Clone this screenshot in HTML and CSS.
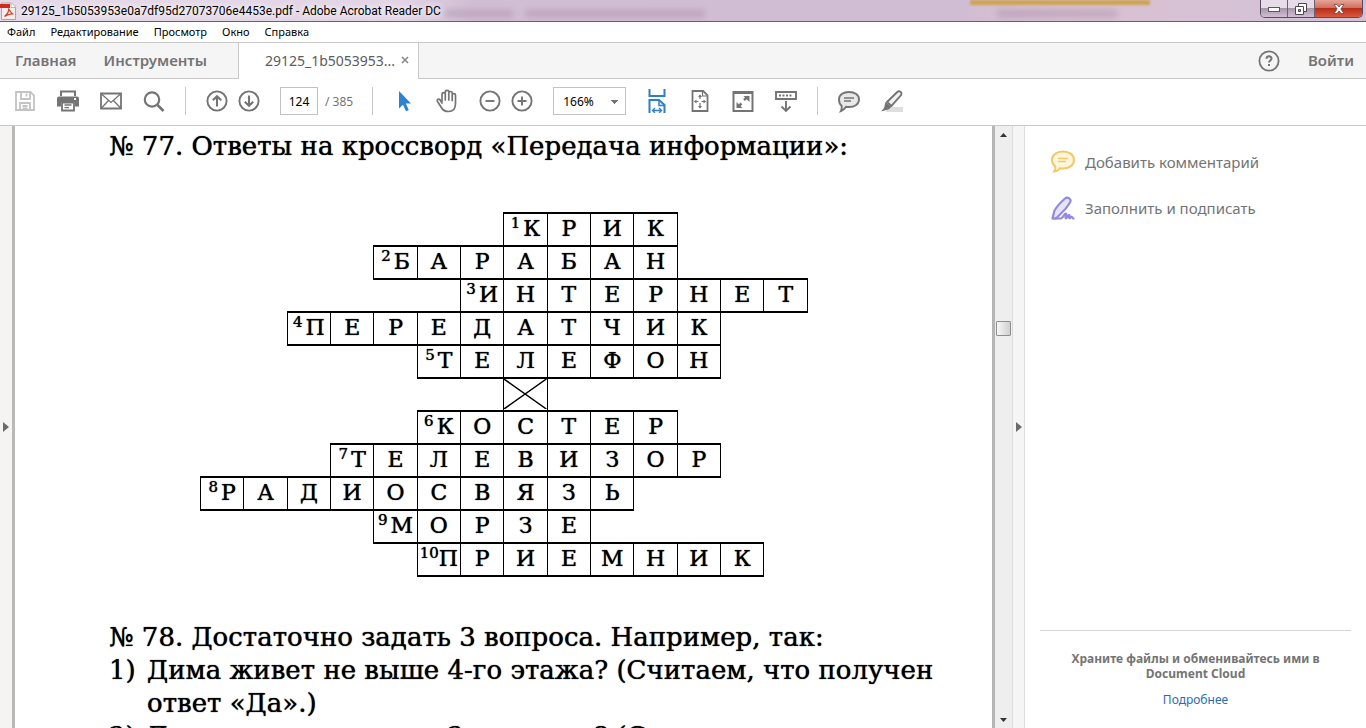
FILE: index.html
```html
<!DOCTYPE html>
<html lang="ru">
<head>
<meta charset="utf-8">
<title>29125_1b5053953e0a7df95d27073706e4453e.pdf - Adobe Acrobat Reader DC</title>
<link rel="stylesheet" href="styles.css">
</head>
<body>
<header class="titlebar">
  <span class="glass-gold"></span>
  <span class="glass-smudge smudge-a"></span>
  <span class="glass-smudge smudge-b"></span>
  <span class="glass-smudge smudge-c"></span>
  <svg class="app-icon" width="16" height="18" viewBox="0 0 16 18"><path d="M1.500 1h10l4 4v12.500h-14z" fill="#f3eeee" stroke="#aaa3a8"/><path d="M0 2h10v4H0z" fill="#d3281c"/><path d="M11 1v4.500h4.500" fill="#fff" stroke="#b8b0b4"/><path d="M4.500 14.500C7 12.500 9 9 8.500 6.500c2 4 3 5 5 5.500-3-.5-6 .5-9 2.500z" fill="none" stroke="#d8402f" stroke-width="1.200"/></svg>
  <span class="title">29125_1b5053953e0a7df95d27073706e4453e.pdf - Adobe Acrobat Reader DC</span>
  <div class="win-buttons">
    <button class="win-btn win-min" aria-label="Свернуть"><svg width="14" height="8" viewBox="0 0 14 8"><rect x="1.500" y="2.500" width="11" height="4" fill="#fff" stroke="#5d5560"/></svg></button>
    <button class="win-btn win-max" aria-label="Восстановить"><svg width="12" height="12" viewBox="0 0 12 12"><path d="M3.500.5h8v8h-8z" fill="#fff" stroke="#4d4652"/><path d="M.5 3.500h8v8h-8z" fill="#fff" stroke="#4d4652"/><path d="M3.500 6.500h2v2h-2z" fill="#a99bac" stroke="#4d4652"/></svg></button>
    <button class="win-btn win-close" aria-label="Закрыть"><svg width="12" height="10" viewBox="0 0 12 10"><path d="M1 .5h3l2 2.500L8 .5h3L7.800 5 11 9.500H8L6 7 4 9.500H1L4.200 5z" fill="#fff" stroke="#6b4040" stroke-width=".8"/></svg></button>
  </div>
</header>
<nav class="menubar">
  <button>Файл</button><button>Редактирование</button><button>Просмотр</button><button>Окно</button><button>Справка</button>
</nav>
<div class="tabbar">
  <button class="tab-main">Главная</button>
  <button class="tab-main">Инструменты</button>
  <div class="tab-doc"><span>29125_1b5053953...</span><button aria-label="Закрыть вкладку"><svg width="8" height="8" viewBox="0 0 8 8"><path d="M1 1l6 6M7 1L1 7" stroke="#8a8a8a" stroke-width="1.600"/></svg></button></div>
  <button class="help" aria-label="Справка"><svg width="22" height="22" viewBox="0 0 22 22" fill="none" stroke="#747474" stroke-width="1.800"><circle cx="11" cy="11" r="9.600"/><path d="M8.500 8.800c0-3.200 5-3.200 5-.3 0 1.900-2.500 2-2.500 4" stroke-width="2"/><path d="M11 14v2" stroke-width="2"/></svg></button>
  <button class="login">Войти</button>
</div>
<div class="toolbar">
  <button aria-label="Сохранить"><svg viewBox="0 0 24 24" fill="none" stroke="#c3c3c3" stroke-width="1.800"><path d="M3 3h14.500L21 6.500V21H3z"/><path d="M8 3v7h9V3M13.500 4.500v3M7 21v-7h10v7M9.500 17h5M9.500 19.500h5"/></svg></button>
  <button aria-label="Печать"><svg viewBox="0 0 24 24"><path d="M5 7V2.500h14V7" fill="none" stroke="#747474" stroke-width="2"/><path d="M3 7.500h18a2 2 0 0 1 2 2v8h-4V13H5v4.500H1v-8a2 2 0 0 1 2-2z" fill="#747474"/><path d="M6 13.500h12v8H6z" fill="#fff" stroke="#747474" stroke-width="1.800"/><path d="M8.500 16h7M8.500 18.700h4.500" stroke="#747474" stroke-width="1.300"/><path d="M18 9h2v2h-2z" fill="#fff"/></svg></button>
  <button aria-label="Отправить"><svg viewBox="0 0 24 24" fill="none" stroke="#747474"><path d="M2 4.500h20v15H2z" stroke-width="1.800"/><path d="M2.500 5l9.500 8.500L21.500 5M2.500 19l7-7.500M21.500 19l-7-7.500" stroke-width="1.300"/></svg></button>
  <button aria-label="Найти"><svg viewBox="0 0 24 24" fill="none" stroke="#747474"><circle cx="10" cy="10.500" r="7.200" stroke-width="2.200"/><path d="M15.500 16l6 6" stroke-width="2.600"/></svg></button>
  <span class="sep"></span>
  <div class="pair">
    <button aria-label="Предыдущая"><svg viewBox="0 0 24 24" fill="none" stroke="#747474" stroke-width="1.900"><circle cx="12" cy="12" r="9.600"/><path d="M12 17.500V7.500M7.800 11.300L12 7.200l4.200 4.100" stroke-width="2.100"/></svg></button>
    <button aria-label="Следующая"><svg viewBox="0 0 24 24" fill="none" stroke="#747474" stroke-width="1.900"><circle cx="12" cy="12" r="9.600"/><path d="M12 6.500v10M7.800 12.700l4.200 4.100 4.200-4.100" stroke-width="2.100"/></svg></button>
  </div>
  <label class="pages"><input type="text" value="124" aria-label="Страница"><span>/ 385</span></label>
  <span class="sep"></span>
  <button aria-label="Выделение"><svg viewBox="0 0 24 24"><path d="M7 2v17.500l4-3.800 3 6.500 2.800-1.300-3-6.400H19z" fill="#2e83d0"/></svg></button>
  <button aria-label="Рука"><svg viewBox="0 0 24 24" fill="none" stroke="#747474" stroke-width="1.700" stroke-linecap="round" stroke-linejoin="round"><path d="M7 12.500V5.200c0-2 3.300-2 3.300 0V11 2.800c0-2 3.500-2 3.500 0V11 4c0-2 3.400-2 3.400 0v7.500V6.200c0-2 3.300-2 3.300 0v8.300c0 5-2.500 8-7 8-3.700 0-6-1.500-7.500-4.500l-3.600-5.800c-.8-1.900 1.500-2.800 2.800-1.200L7 14"/></svg></button>
  <div class="pair">
    <button aria-label="Уменьшить"><svg viewBox="0 0 24 24" fill="none" stroke="#747474" stroke-width="1.900"><circle cx="12" cy="12" r="9.600"/><path d="M7.500 12h9"/></svg></button>
    <button aria-label="Увеличить"><svg viewBox="0 0 24 24" fill="none" stroke="#747474" stroke-width="1.900"><circle cx="12" cy="12" r="9.600"/><path d="M7.500 12h9M12 7.500v9"/></svg></button>
  </div>
  <select class="zoom" aria-label="Масштаб"><option>166%</option></select>
  <button aria-label="По ширине"><svg viewBox="0 0 24 24" fill="none" stroke="#2e7fc6" stroke-width="2"><path d="M4.500 0v7h15V0M4.500 24V11H14l5.500 5v8"/><path d="M14 11v5.500h5.500" stroke-width="1.500"/><path d="M7.500 21.500h9M10 19l-2.500 2.500L10 24M14 19l2.500 2.500L14 24" stroke-width="1.300"/></svg></button>
  <button aria-label="Страница целиком"><svg viewBox="0 0 24 24" fill="none" stroke="#747474" stroke-width="1.800"><path d="M4.500 2h10.700l4.300 4.300V22h-15z"/><path d="M14.500 2v5h5" stroke-width="1.200"/><path d="M12 6v4M12 14v5M6.500 12.500h4M13.500 12.500h4" stroke-width="1.200"/><path d="M10 8l2-2.500L14 8zM10 17l2 2.500 2-2.500zM8.500 10.500l-2.500 2 2.500 2zM15.500 10.500l2.500 2-2.500 2z" fill="#747474" stroke="none"/></svg></button>
  <button aria-label="Полный экран"><svg viewBox="0 0 24 24" fill="none" stroke="#747474" stroke-width="2"><path d="M2.500 3h19v19h-19z"/><path d="M2.500 3.500h19" stroke-width="3"/><path d="M13 11l4-3.500M10.500 14.500l-4 3.500" stroke-width="2.400"/><path d="M12.500 7h6v6zM11.500 19h-6v-6z" fill="#747474" stroke="none"/></svg></button>
  <button aria-label="Режим чтения"><svg viewBox="0 0 24 24" fill="none" stroke="#747474" stroke-width="1.900"><path d="M2 3h20v7H2z"/><path d="M5 6.500h14" stroke-dasharray="2 1.500" stroke-width="2"/><path d="M12 12v10M7.500 17.500l4.500 4.500 4.500-4.500"/></svg></button>
  <span class="sep"></span>
  <button aria-label="Комментарий"><svg viewBox="0 0 24 24"><path d="M12 3c6 0 10 3 10 7.500S18 18 12 18c-1.200 0-2-.1-3-.3-1.200 2-3 3.600-5 4.300.8-1.500 1-3.300.6-5.200C2.900 15.400 2 13.200 2 10.500 2 6 6 3 12 3z" fill="#e8e8e8" stroke="#747474" stroke-width="1.900"/><path d="M7 9h10M7 12h7" stroke="#747474" stroke-width="1.300"/></svg></button>
  <button aria-label="Выделить текст"><svg viewBox="0 0 24 24"><path d="M7 18h16v5H6z" fill="#dedede"/><path d="M7 13L17.500 2.800c2-1.600 4.800.5 3.800 3L11.500 17z" fill="#f2f2f2" stroke="#747474" stroke-width="1.900"/><path d="M5.500 13l6 4.700-2.500 2.500L1 22.500l3-3.500z" fill="#747474"/></svg></button>
</div>
<main class="workspace">
  <button class="rail rail-left" aria-label="Показать панель навигации"><svg width="6" height="10" viewBox="0 0 6 10"><path d="M0 0l6 5-6 5z" fill="#6b6b6b"/></svg></button>
  <article class="page">
    <h2>№ 77. Ответы на кроссворд «Передача информации»:</h2>
    <table class="crossword">
      <tr><td class="gap" colspan="7"></td><td><sup>1</sup>К</td><td>Р</td><td>И</td><td>К</td><td class="gap" colspan="3"></td></tr>
      <tr><td class="gap" colspan="4"></td><td><sup>2</sup>Б</td><td>А</td><td>Р</td><td>А</td><td>Б</td><td>А</td><td>Н</td><td class="gap" colspan="3"></td></tr>
      <tr><td class="gap" colspan="6"></td><td><sup>3</sup>И</td><td>Н</td><td>Т</td><td>Е</td><td>Р</td><td>Н</td><td>Е</td><td>Т</td></tr>
      <tr><td class="gap" colspan="2"></td><td><sup>4</sup>П</td><td>Е</td><td>Р</td><td>Е</td><td>Д</td><td>А</td><td>Т</td><td>Ч</td><td>И</td><td>К</td><td class="gap" colspan="2"></td></tr>
      <tr><td class="gap" colspan="5"></td><td><sup>5</sup>Т</td><td>Е</td><td>Л</td><td>Е</td><td>Ф</td><td>О</td><td>Н</td><td class="gap" colspan="2"></td></tr>
      <tr><td class="gap" colspan="7"></td><td><svg class="cross" viewBox="0 0 42 32" preserveAspectRatio="none"><path d="M0 0l42 32M42 0L0 32" stroke="#000" stroke-width="1.500"/></svg></td><td class="gap" colspan="6"></td></tr>
      <tr><td class="gap" colspan="5"></td><td><sup>6</sup>К</td><td>О</td><td>С</td><td>Т</td><td>Е</td><td>Р</td><td class="gap" colspan="3"></td></tr>
      <tr><td class="gap" colspan="3"></td><td><sup>7</sup>Т</td><td>Е</td><td>Л</td><td>Е</td><td>В</td><td>И</td><td>З</td><td>О</td><td>Р</td><td class="gap" colspan="2"></td></tr>
      <tr><td><sup>8</sup>Р</td><td>А</td><td>Д</td><td>И</td><td>О</td><td>С</td><td>В</td><td>Я</td><td>З</td><td>Ь</td><td class="gap" colspan="4"></td></tr>
      <tr><td class="gap" colspan="4"></td><td><sup>9</sup>М</td><td>О</td><td>Р</td><td>З</td><td>Е</td><td class="gap" colspan="5"></td></tr>
      <tr><td class="gap" colspan="5"></td><td><sup class="wide">10</sup>П</td><td>Р</td><td>И</td><td>Е</td><td>М</td><td>Н</td><td>И</td><td>К</td><td class="gap"></td></tr>
    </table>
    <h2>№ 78. Достаточно задать 3 вопроса. Например, так:</h2>
    <div class="item"><span>1)</span><p>Дима живет не выше 4-го этажа? (Считаем, что получен<br>ответ «Да».)</p></div>
    <div class="item"><span>2)</span><p>Дима живет не выше 2-го этажа? (Считаем</p></div>
  </article>
  <div class="scrollbar">
    <button aria-label="Вверх"><svg width="7" height="4" viewBox="0 0 7 4"><path d="M0 4l3.500-4L7 4z" fill="#333"/></svg></button>
    <div class="track"><span class="thumb"></span></div>
    <button aria-label="Вниз"><svg width="7" height="4" viewBox="0 0 7 4"><path d="M0 0l3.500 4L7 0z" fill="#333"/></svg></button>
  </div>
  <button class="rail rail-right" aria-label="Скрыть панель инструментов"><svg width="6" height="10" viewBox="0 0 6 10"><path d="M0 0l6 5-6 5z" fill="#6b6b6b"/></svg></button>
  <aside class="panel">
    <button class="tool"><svg width="24" height="24" viewBox="0 0 24 24"><path d="M12 1.500c6.500 0 11 3.500 11 8.500s-4.500 8.500-11 8.500c-1 0-2-.1-3-.3-1.300 2-3.300 3-5.800 3.300 1.100-1.600 1.600-3.200 1.100-5C2.200 14.900 1 12.600 1 10c0-5 4.500-8.500 11-8.500z" fill="#fdf6dc" stroke="#efca68" stroke-width="2"/><path d="M7 8.500h10M7 11.500h8" stroke="#efca68" stroke-width="1.400"/></svg>Добавить комментарий</button>
    <button class="tool"><svg width="24" height="24" viewBox="0 0 24 24" fill="none" stroke="#9389dd" stroke-width="2.200" stroke-linecap="round" stroke-linejoin="round"><path d="M1.500 22.500l1.800-7.500C6 10 10 6 14 2.500c2.500-2.300 7 .5 5 4C16.500 11 13 15 9 18.500L5 22.500z" fill="#e6e3fb"/><path d="M2 22.500h8c2.500-.8 3.500-5.500 5-5s-1.500 4.800 0 4.800c1.300 0 2.300-3.800 3.300-3.300.9.500-.8 3 .2 3.200 1 .2 1.500-1.700 2.200-1.500.8.200.6 1.600 1.800 1.800"/></svg>Заполнить и подписать</button>
    <div class="cloud">
      <strong>Храните файлы и обменивайтесь ими в Document Cloud</strong>
      <a href="#">Подробнее</a>
    </div>
  </aside>
</main>
</body>
</html>
```
FILE: styles.css
```css
* { box-sizing: border-box; }
body {
  margin: 0;
  height: 100vh;
  display: flex;
  flex-direction: column;
  overflow: hidden;
  background: #fff;
  font-family: "Noto Sans", "Open Sans", sans-serif;
  font-size: 12px;
  color: #000;
}
button {
  margin: 0;
  padding: 0;
  border: 0;
  background: none;
  font: inherit;
  color: inherit;
}
svg { display: block; flex: none; }

/* Window title */
.titlebar {
  position: relative;
  flex: none;
  height: 22px;
  display: flex;
  align-items: center;
  gap: 5px;
  border-bottom: 1px solid #6f5a73;
  background: linear-gradient(90deg, #e6dae8 0, #e2d4e5 400px, #d2bed4 470px, #d1bdd3 70%, #d9c1d2 80%, #d3c1d9 100%);
}
.app-icon { margin-top: 1px; }
.title { flex: 1; font-family: Roboto, "Noto Sans", sans-serif; white-space: nowrap; text-shadow: 0 0 6px #fff, 0 0 6px #fff; }
.app-icon, .title { position: relative; }
.glass-gold {
  position: absolute;
  top: 0;
  left: 71%;
  width: 180px;
  height: 5px;
  background: #cda552;
  filter: blur(1px);
}
.glass-smudge {
  position: absolute;
  top: 10px;
  height: 7px;
  background: #8f7692;
  opacity: .35;
  filter: blur(3px);
}
.smudge-a { left: 445px; width: 68px; }
.smudge-b { left: 525px; width: 180px; }
.smudge-c { left: 73%; width: 120px; }
.win-buttons {
  align-self: flex-start;
  display: flex;
  height: 18px;
  margin-right: 3px;
  border: 1px solid #584a5c;
  border-top: 0;
  border-radius: 0 0 5px 5px;
  overflow: hidden;
}
.win-btn {
  display: grid;
  place-items: center;
  width: 27px;
  border-right: 1px solid #6d5f70;
  background: linear-gradient(#e6dce8 45%, #a796a9 50%, #cfc0d2);
}
.win-close { width: 47px; border: 0; background: linear-gradient(#e5a597 0, #d2705f 45%, #b82e1b 50%, #d85a3c); }

/* Menu */
.menubar {
  flex: none;
  display: flex;
  gap: 15px;
  height: 21px;
  padding: 0 7px 2px;
  border-bottom: 1px solid #c8c8c8;
  font-size: 11px;
}

/* Tabs */
.tabbar {
  flex: none;
  display: flex;
  align-items: stretch;
  height: 36px;
  border-bottom: 1px solid #c8c8c8;
  background: #f5f5f5;
  font-size: 15px;
  color: #747474;
}
.tab-main, .login { padding-bottom: 2px; font-weight: 600; }
.tab-main { padding-left: 15px; padding-right: 12px; }
.tab-doc {
  display: flex;
  align-items: center;
  justify-content: space-between;
  width: 181px;
  margin: 0 auto -1px 19px;
  padding: 0 9px 2px 26px;
  border: solid #c8c8c8;
  border-width: 0 1px;
  background: #fff;
  font-size: 14px;
  color: #5c5c5c;
}
.login { padding-left: 28px; padding-right: 12px; }

/* Tools */
.toolbar {
  flex: none;
  display: flex;
  align-items: center;
  gap: 19px;
  height: 47px;
  padding: 0 13px 2px;
  border-bottom: 1px solid #c8c8c8;
}
.toolbar button, .toolbar svg { flex: none; width: 24px; height: 24px; }
.sep { width: 1px; height: 28px; background: #c8c8c8; }
.pair { display: flex; gap: 8px; }
.pages { display: flex; align-items: center; gap: 7px; color: #747474; }
.pages input, .zoom {
  height: 28px;
  border: 1px solid #c3c3c3;
  border-radius: 0;
  background: #fff;
  font: inherit;
  color: #000;
}
.pages input { width: 38px; padding: 0; text-align: center; }
.zoom {
  width: 73px;
  padding: 0 9px;
  appearance: none;
  background:
    linear-gradient(to bottom right, #747474 50%, transparent 50%) 61px 12px / 4px 4px no-repeat,
    linear-gradient(to bottom left, #747474 50%, transparent 50%) 57px 12px / 4px 4px no-repeat,
    #fff;
}

/* Document area */
.workspace { flex: 1; min-height: 0; display: flex; align-items: stretch; }
.rail { flex: none; display: grid; place-items: center; background: #f5f5f5; }
.rail-left { width: 15px; padding-right: 1px; border-right: 3px solid #b9b9b9; background: #f5f4f2; }
.rail-right { width: 12px; border-right: 1px solid #dcdcdc; }
.page {
  flex: 1;
  min-width: 0;
  overflow: hidden;
  padding: 4px 20px 0 94px;
  border-right: 3px solid #b5b5b5;
  font: 26px/33px "DejaVu Serif", "Liberation Serif", serif;
  text-shadow: 0 0 1px #000;
  white-space: nowrap;
}
.page h2 { margin: 0; font: inherit; }
.crossword {
  width: 608px;
  margin: 49px 0 44px 91px;
  border-collapse: collapse;
  table-layout: fixed;
  font-size: 22px;
  line-height: 30px;
}
.crossword td { height: 33px; padding: 0 0 1px; border: solid #000; border-width: 2px 1px; text-align: center; }
.crossword .gap { border: 0; }
.crossword sup { margin-right: 3px; font-size: 15px; line-height: 0; vertical-align: 8px; }
.crossword .wide { margin-right: 0; }
.cross { width: 100%; height: 30px; }
.item { display: flex; }
.item span { width: 38px; }
.item p { margin: 0; }

/* Scroll bar */
.scrollbar {
  flex: none;
  display: flex;
  flex-direction: column;
  width: 18px;
  background: #eee;
  border-right: 1px solid #dcdcdc;
}
.scrollbar button { display: grid; place-items: center; height: 17px; }
.track { flex: 1; padding: 178px 1px 0; }
.thumb {
  display: block;
  width: 15px;
  height: 15px;
  border: 1px solid #8e8e8e;
  border-radius: 1px;
  background: linear-gradient(90deg, #f7f7f7, #cfcfcf);
}

/* Tools panel */
.panel {
  flex: none;
  display: flex;
  flex-direction: column;
  width: 341px;
  padding: 24px 15px 21px;
  color: #747474;
}
.tool { display: flex; align-items: center; gap: 10px; height: 24px; margin: 0 0 22px 11px; font-size: 15px; }
.cloud {
  display: flex;
  flex-direction: column;
  align-items: center;
  gap: 11px;
  margin-top: auto;
  padding: 20px 20px 0;
  border-top: 1px solid #d6d6d6;
  line-height: 15px;
  text-align: center;
}
.cloud a { color: #2a6cb0; text-decoration: none; }
```
